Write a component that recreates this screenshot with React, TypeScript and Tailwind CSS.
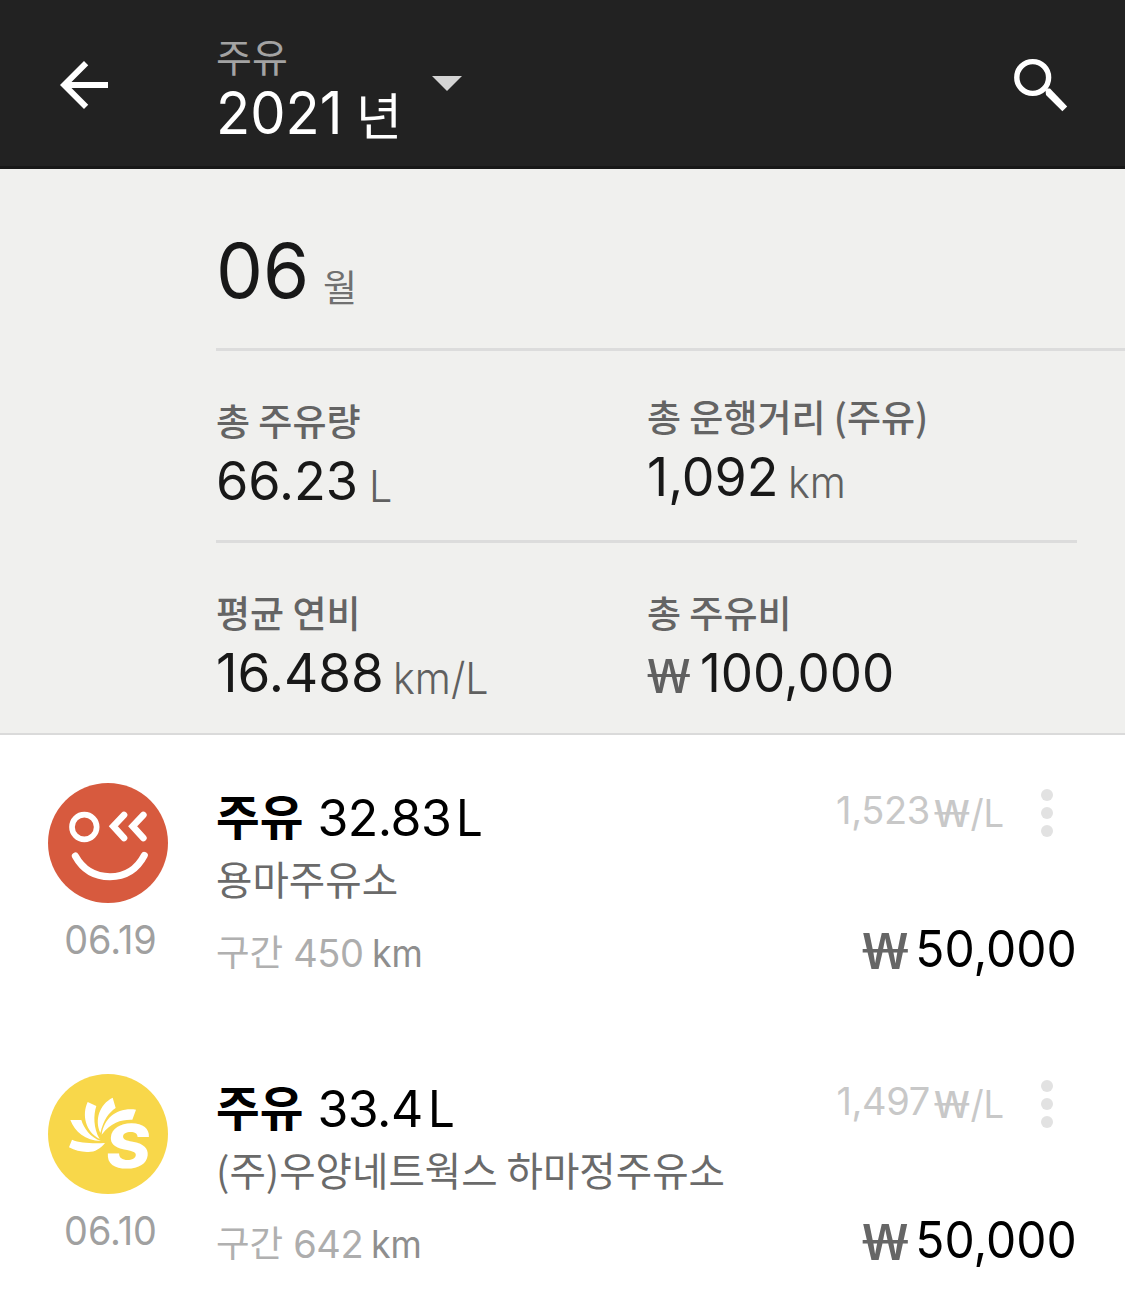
import type { ReactNode } from "react";
import clsx from "clsx";

const inter = "font-['Inter','Noto_Sans_CJK_KR',sans-serif] leading-none";
const noto = "font-['Noto_Sans_CJK_KR',sans-serif] leading-none";

function BackIcon() {
  return (
    <svg className="w-[72px] h-[72px]" viewBox="0 0 24 24" fill="#fff">
      <path d="M20 11H7.83l5.59-5.59L12 4l-8 8 8 8 1.41-1.41L7.83 13H20v-2z" />
    </svg>
  );
}

function SearchIcon() {
  return (
    <svg className="w-[54px] h-[54px]" viewBox="0 0 54 54" fill="none" stroke="#fff">
      <circle cx="18.7" cy="19.5" r="15.9" strokeWidth="5.4" />
      <path d="M31.5 32.5L33 30.500H36L53.2 48.500l-4.800 4.800L32 37z" fill="#fff" stroke="none" />
    </svg>
  );
}

function SmileLogo() {
  return (
    <svg className="w-[120px] h-[120px]" viewBox="54 39 360 360" fill="none" stroke="#fff" strokeLinecap="round">
      <circle cx="234" cy="219" r="180" fill="#d75a3e" stroke="none" />
      <circle cx="163" cy="171" r="37" strokeWidth="17" />
      <path d="M282 135l-32 34 32 35M340 135l-32 34 32 35" strokeWidth="20" />
      <path d="M136 258C158 298 195 320 240 320S321 298 343 256" strokeWidth="21" />
    </svg>
  );
}

function PetalLogo() {
  return (
    <svg className="w-[120px] h-[120px]" viewBox="54 42 360 360" fill="#fff">
      <circle cx="234" cy="222" r="180" fill="#f8d74a" />
      <path d="M126 239C150 249 185 251 225 249C212 266 195 276 175 276C155 277 135 271 117 262Z" />
      <path d="M121 180L154 180C162 205 180 232 213 243C165 242 135 215 121 180Z" />
      <path d="M173 126C182 131 190 133 199 138C190 165 190 205 209 237C166 215 155 165 173 126Z" />
      <path d="M248 113L257 144C237 158 221 178 211 219C193 180 208 133 248 113Z" />
      <path d="M318 149L307 179C275 178 245 185 215 224C223 172 262 142 318 149Z" />
      <text
        transform="translate(222 323) skewX(-6)"
        fontFamily="Inter, sans-serif"
        fontWeight="800"
        fontSize="182"
        textLength="134"
        lengthAdjust="spacingAndGlyphs"
      >
        S
      </text>
    </svg>
  );
}

function Won({ className }: { className?: string }) {
  return (
    <span className={clsx("font-['Noto_Sans',sans-serif] leading-none origin-left", className)}>₩</span>
  );
}

function Stat({ label, children, className }: { label: string; children: ReactNode; className?: string }) {
  return (
    <div className={className}>
      <div className={clsx(noto, "text-[37px] font-medium text-[#646464] whitespace-nowrap")}>{label}</div>
      <div className="flex mt-[16px] whitespace-nowrap">{children}</div>
    </div>
  );
}

function Value({ children, className }: { children: ReactNode; className?: string }) {
  return <span className={clsx(inter, "text-[53px] text-[#181818] origin-left", className)}>{children}</span>;
}

function Unit({ children, className }: { children: ReactNode; className?: string }) {
  return (
    <span className={clsx(inter, "text-[44px] font-light text-[#606060] mt-[9px] origin-left scale-x-[0.94]", className)}>
      {children}
    </span>
  );
}

type Entry = {
  id: number;
  logo: ReactNode;
  date: string;
  amount: string;
  station: string;
  distance: string;
  unitPrice: string;
  price: string;
};

const entries: Entry[] = [
  {
    id: 1,
    logo: <SmileLogo />,
    date: "06.19",
    amount: "32.83",
    station: "용마주유소",
    distance: "450",
    unitPrice: "1,523",
    price: "50,000",
  },
  {
    id: 2,
    logo: <PetalLogo />,
    date: "06.10",
    amount: "33.4",
    station: "(주)우양네트웍스 하마정주유소",
    distance: "642",
    unitPrice: "1,497",
    price: "50,000",
  },
];

function EntryRow({ entry }: { entry: Entry }) {
  return (
    <div className="flex h-[291px] pl-12 pr-[48px] whitespace-nowrap">
      {/* Brand and date */}
      <div className="w-[168px] shrink-0 pt-12">
        {entry.logo}
        <div className={clsx(inter, "text-[39px] w-[125px] text-center text-[#a0a0a0] mt-[17px] scale-x-[0.97]")}>
          {entry.date}
        </div>
      </div>

      {/* Details */}
      <div className="flex-1 min-w-0 pt-[57px]">
        <div className="flex h-[47px]">
          <span className={clsx(noto, "text-[47.5px] font-bold text-black -mt-px")}>주유</span>
          <span className={clsx(inter, "text-[50px] text-black ml-[14px] tracking-[-0.01em] mt-px")}>{entry.amount}</span>
          <span className={clsx(inter, "text-[50px] text-black ml-[5px] mt-px origin-left scale-x-[0.95]")}>L</span>
        </div>
        <div className={clsx(noto, "text-[39.6px] text-[#6a6a6a] mt-[19px]")}>{entry.station}</div>
        <div className="flex mt-[33px]">
          <span className={clsx(noto, "text-[36.5px] text-[#b0b0b0] mt-[2px]")}>구간</span>
          <span className={clsx(inter, "text-[38px] text-[#adadad] ml-[10px] mt-[3px] tracking-[-0.01em]")}>
            {entry.distance}
          </span>
          <span className={clsx(inter, "text-[38px] text-[#8e8e8e] ml-[8px] mt-[3px] origin-left scale-x-[0.94]")}>
            km
          </span>
        </div>
      </div>

      {/* Prices */}
      <div className="flex flex-col items-end pt-[54px]">
        <div className="flex">
          <div className="flex pt-[2px] mr-[37px]">
            <span className={clsx(inter, "text-[38px] text-[#c8c8c8] tracking-[-0.01em]")}>{entry.unitPrice}</span>
            <Won className="text-[38px] text-[#c8c8c8] scale-x-[1.4] w-[36px] mt-[2px] ml-[4px]" />
            <span className={clsx(inter, "text-[38px] text-[#c8c8c8] mt-[3px] origin-right scale-x-[0.96] -ml-px")}>
              /L
            </span>
          </div>
          <div className="flex flex-col gap-[6px] mr-[24px]">
            <div className="w-3 h-3 rounded-full bg-[#e2e2e2]"></div>
            <div className="w-3 h-3 rounded-full bg-[#e2e2e2]"></div>
            <div className="w-3 h-3 rounded-full bg-[#e2e2e2]"></div>
          </div>
        </div>
        <div className="flex mt-[86px]">
          <Won className="text-[51px] font-medium text-[#666] scale-x-[1.32] w-[46px] mt-[1px]" />
          <span className={clsx(inter, "text-[51px] text-black -ml-[3px] origin-right scale-x-[0.94]")}>{entry.price}</span>
        </div>
      </div>
    </div>
  );
}

export default function App() {
  return (
    <div className="w-[1125px] h-[1311px] overflow-hidden bg-white">
      {/* App bar */}
      <header className="flex h-[169px] pl-12 pr-[57px] bg-[#222] border-b-[3px] border-[#181818]">
        <div className="w-[168px] pt-[49px]">
          <BackIcon />
        </div>
        <div className="pt-[36px] w-[216px]">
          <div className={clsx(noto, "text-[39px] text-[#a3a3a3]")}>주유</div>
          <div className="flex mt-[8px]">
            <span className={clsx(inter, "text-[59px] text-white w-[140px] origin-left scale-x-[0.95]")}>2021</span>
            <span className={clsx(noto, "text-[50px] text-white mt-[5px]")}>년</span>
          </div>
        </div>
        <svg className="w-[30px] h-[15px] mt-[76px]" viewBox="0 0 30 15">
          <path d="M0 0h30L15 15z" fill="#d4d4d4" />
        </svg>
        <div className="ml-auto pt-[58px]">
          <SearchIcon />
        </div>
      </header>

      {/* Month summary */}
      <section className="h-[566px] pl-[216px] bg-[#f0f0ee] border-b-2 border-[#dadada]">
        <div className="flex h-[179px] pt-[63px]">
          <span className={clsx(inter, "text-[76px] text-[#181818] w-[107px] origin-left scale-x-[0.98]")}>06</span>
          <span className={clsx(noto, "text-[37px] text-[#707070] mt-[36px]")}>월</span>
        </div>
        <div className="h-[3px] bg-[#dcdcdc]"></div>
        <div className="flex h-[189px] pt-[51px]">
          <Stat label="총 주유량" className="w-[431px]">
            <Value className="scale-x-[0.985]">66.23</Value>
            <Unit className="ml-[9px]">L</Unit>
          </Stat>
          <Stat label="총 운행거리 (주유)" className="-mt-1">
            <Value className="scale-x-[0.98]">1,092</Value>
            <Unit className="ml-[7px]">km</Unit>
          </Stat>
        </div>
        <div className="h-[3px] mr-[48px] bg-[#dcdcdc]"></div>
        <div className="flex pt-[51px]">
          <Stat label="평균 연비" className="w-[431px]">
            <Value>16.488</Value>
            <Unit className="ml-[9px]">km/L</Unit>
          </Stat>
          <Stat label="총 주유비">
            <Won className="text-[47px] text-[#606060] scale-x-[1.38] w-[53px] mt-[5px]" />
            <Value className="scale-x-[0.965]">100,000</Value>
          </Stat>
        </div>
      </section>

      {/* Fuel entries */}
      <main>
        {entries.map((entry) => (
          <EntryRow key={entry.id} entry={entry} />
        ))}
      </main>
    </div>
  );
}
